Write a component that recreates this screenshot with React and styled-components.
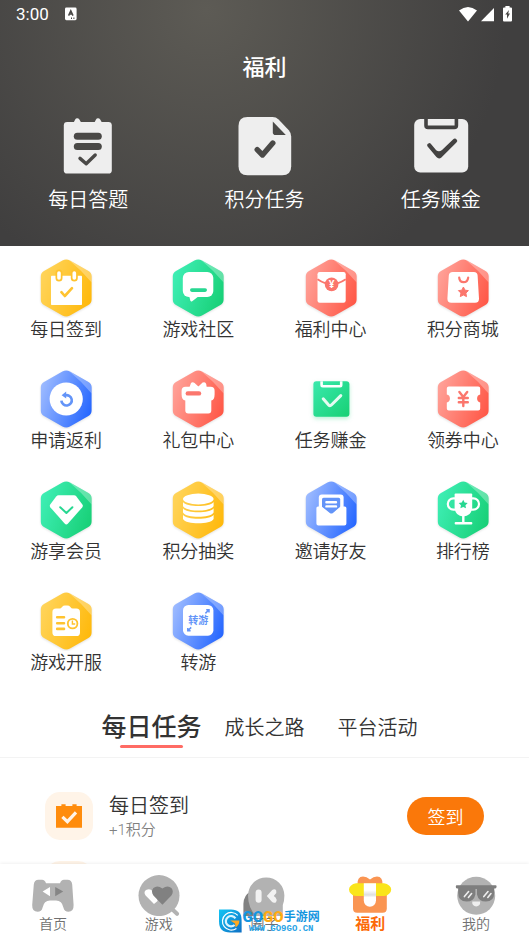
import React, { useId, useState } from "react";
import styled, { createGlobalStyle } from "styled-components";

const GlobalStyle = createGlobalStyle`
  * {
    box-sizing: border-box;
  }

  body {
    margin: 0;
    background-color: #fff;
    color: #333;
    font-family: Roboto, "Noto Sans CJK SC", sans-serif;
    font-weight: 350;
  }

  a {
    color: inherit;
    text-decoration: none;
  }

  button {
    border: none;
    padding: 0;
    background: none;
    color: inherit;
    font-family: inherit;
    font-weight: inherit;
    cursor: pointer;
  }
`;

const Screen = styled.div`
  display: flex;
  flex-direction: column;
  height: 100vh;
`;

const Content = styled.main`
  flex: 1;
  min-height: 0;
  overflow-y: auto;
  scrollbar-width: none;
`;

const Header = styled.header`
  padding-bottom: 32px;
  background: radial-gradient(circle at 39% 10px, #5d5b55, #403f3f 300px);
  color: #fff;
`;

const StatusBar = styled.div`
  display: flex;
  align-items: center;
  gap: 16px;
  height: 28px;
  padding: 0 16px;
  font-size: 17px;
  font-weight: 400;
`;

const StatusIcons = styled.div`
  display: flex;
  margin-left: auto;
`;

const Title = styled.h1`
  margin: 24px 0 32px;
  font-size: 22px;
  line-height: 32px;
  font-weight: 500;
  text-align: center;
`;

const Shortcuts = styled.nav`
  display: grid;
  grid-template-columns: repeat(3, 1fr);
`;

const Shortcut = styled.a`
  display: flex;
  flex-direction: column;
  align-items: center;
  gap: 10px;
  font-size: 20px;
  line-height: 28px;
`;

const Menu = styled.nav`
  display: grid;
  grid-template-columns: repeat(4, 1fr);
  row-gap: 27px;
  padding-top: 12px;
`;

const MenuItem = styled.a`
  display: flex;
  flex-direction: column;
  align-items: center;
  color: #333;
  font-size: 18px;
  line-height: 24px;
`;

const Tabs = styled.div`
  display: flex;
  justify-content: center;
  padding: 36px 0 9px;
  border-bottom: 1px solid #f3f3f3;
`;

const Tab = styled.button`
  display: flex;
  flex-direction: column;
  align-items: center;
  width: 113px;
  font-size: ${(props) => (props.$active ? "25px" : "20px")};
  font-weight: ${(props) => (props.$active ? 500 : 350)};
  line-height: 34px;
  white-space: nowrap;

  &::after {
    content: "";
    width: 63px;
    height: 3px;
    border-radius: 2px;
    background-color: ${(props) => (props.$active ? "#ff6b64" : "transparent")};
  }
`;

const TaskList = styled.ul`
  display: flex;
  flex-direction: column;
  gap: 21px;
  margin: 0;
  padding: 34px 45px;
  list-style: none;
`;

const Task = styled.li`
  display: flex;
  align-items: center;
  gap: 16px;
`;

const TaskIcon = styled.div`
  display: flex;
  align-items: center;
  justify-content: center;
  width: 48px;
  height: 48px;
  border-radius: 15px;
  background-color: #fff4e8;
`;

const TaskText = styled.div`
  flex: 1;
`;

const TaskTitle = styled.h2`
  margin: 0;
  font-size: 20px;
  font-weight: inherit;
  line-height: 28px;
`;

const TaskReward = styled.p`
  margin: 0;
  color: #808080;
  font-size: 15px;
  line-height: 20px;
`;

const TaskButton = styled.button`
  width: 77px;
  height: 38px;
  border-radius: 19px;
  background-color: #fa780a;
  color: #fff;
  font-size: 18px;
`;

const BottomBar = styled.nav`
  position: relative;
  display: grid;
  grid-template-columns: repeat(5, 1fr);
  padding: 10px 0;
  background-color: #fff;
  box-shadow: 0 -1px 3px rgba(0, 0, 0, 0.06);
`;

const BottomLink = styled.a`
  display: flex;
  flex-direction: column;
  align-items: center;
  color: ${(props) => (props.$active ? "#fc6a08" : "#707070")};
  font-size: ${(props) => (props.$active ? "15px" : "14px")};
  font-weight: ${(props) => (props.$active ? 700 : 350)};
  line-height: 16px;
`;

const SiteMark = styled.div`
  position: absolute;
  left: calc(50% - 46px);
  bottom: 9px;
  display: flex;
  align-items: center;
  gap: 1px;
`;

const SiteName = styled.div`
  display: flex;
  align-items: center;
  color: #1596e0;
  font-size: 12px;
  font-weight: 700;
  line-height: 17px;
  white-space: nowrap;
`;

const SiteLetters = styled.span`
  color: ${(props) => props.$color};
  font-size: 15px;
  font-weight: 900;
`;

const SiteAddress = styled.div`
  color: #2aa4e6;
  font-family: "Liberation Mono", monospace;
  font-size: 9px;
  font-weight: 700;
  line-height: 7px;
  text-align: center;
`;

const tones = {
  yellow: ["#ffd45a", "#ffb90c", "#ffc32f"],
  green: ["#3eeeb4", "#18d077", "#27d791"],
  coral: ["#ffa198", "#ff5847", "#fb766d"],
  blue: ["#9cbaff", "#2667ff", "#6394f8"],
};

const HEX =
  "M26.4 2.6Q30.2.4 34 2.6L52.4 13Q55.6 14.9 55.6 18.6V41.4Q55.6 45.1 52.4 47L34 57.4Q30.2 59.6 26.4 57.4L8 47Q4.8 45.1 4.8 41.4V18.6Q4.8 14.9 8 13Z";

const STAR =
  "M0-5 1.6-1.8 5-1.4 2.5 1.1 3.1 4.6 0 3-3.1 4.6-2.5 1.1-5-1.4-1.6-1.8Z";

function Hexagon({ tone, children }) {
  const id = useId();
  const [from, to] = tones[tone];

  return (
    <svg width="60" height="60" viewBox="0 0 60 60" fill="#fff" aria-hidden="true">
      <defs>
        <linearGradient id={id} x1="0" y1="0.3" x2="1" y2="0.7">
          <stop offset="0" stopColor={from} />
          <stop offset="1" stopColor={to} />
        </linearGradient>
      </defs>
      <path
        d={HEX}
        fill={`url(#${id})`}
        style={{ filter: "drop-shadow(0 1px 1px rgba(0, 0, 0, 0.12))" }}
      />
      <path d="M33 2.1L52.4 13Q55.6 14.9 55.6 18.6V24.6Q45 12 33 2.1Z" fillOpacity="0.3" />
      {children}
    </svg>
  );
}

function Line({ d, color = "#fff", width = 2 }) {
  return (
    <path
      d={d}
      fill="none"
      stroke={color}
      strokeWidth={width}
      strokeLinecap="round"
      strokeLinejoin="round"
    />
  );
}

const yellow = tones.yellow[2];
const green = tones.green[2];
const coral = tones.coral[2];
const blue = tones.blue[2];

function CalendarIcon() {
  return (
    <Hexagon tone="yellow">
      <rect x="15" y="17.7" width="31" height="29.3" rx="0.8" />
      {[21.2, 36.5].map((x) => (
        <rect
          key={x}
          x={x}
          y="13.2"
          width="3.6"
          height="8.6"
          rx="1.8"
          stroke={yellow}
          strokeWidth="3.4"
          paintOrder="stroke"
        />
      ))}
      <Line d="M25.4 34.2L28.8 38 36 30.2" color={yellow} width={2.6} />
    </Hexagon>
  );
}

function ChatIcon() {
  return (
    <Hexagon tone="green">
      <rect x="14.8" y="14" width="30.5" height="25" rx="6" />
      <path d="M21 37.5L22.4 42.8Q23 44 24.2 43.2L31 38Z" />
      <rect x="22" y="30.3" width="17" height="3.6" rx="1.8" fill={green} />
    </Hexagon>
  );
}

function RedPacketIcon() {
  return (
    <Hexagon tone="coral">
      <rect x="16.5" y="14" width="28.2" height="30.7" rx="2.2" />
      <path d="M16.5 21.3Q30.6 31 44.7 21.3" fill="none" stroke={coral} strokeWidth="1.8" />
      <circle cx="30.6" cy="26.4" r="6.8" fill={coral} />
      <text
        x="30.6"
        y="30"
        textAnchor="middle"
        fontFamily="Noto Sans, sans-serif"
        fontWeight="700"
        fontSize="10"
      >
        ¥
      </text>
    </Hexagon>
  );
}

function BagIcon() {
  return (
    <Hexagon tone="coral">
      <path d="M19.8 14H40.8Q44.4 14 44.6 17.5L46 40.5Q46.2 44.7 42 44.7H18.4Q14.2 44.7 14.4 40.5L15.8 17.5Q16 14 19.8 14Z" />
      <Line d="M26.2 19.6Q26.6 24.2 30.6 24.2T35.2 19.6" color={coral} width={2.2} />
      <path
        d={STAR}
        transform="translate(30.4 34)"
        fill={coral}
        stroke={coral}
        strokeLinejoin="round"
      />
    </Hexagon>
  );
}

function RefundIcon() {
  return (
    <Hexagon tone="blue">
      <circle cx="30.2" cy="30" r="16.6" />
      <path d="M29 26.4A5.2 5.2 0 1 1 25.4 31.6" fill="none" stroke={blue} strokeWidth="2.6" />
      <path d="M25.6 26.2L30.2 22.6V29.4Z" fill={blue} />
    </Hexagon>
  );
}

function GiftIcon() {
  return (
    <Hexagon tone="coral">
      <path d="M21.2 19L23 14Q24.5 12.4 26.6 14L30.4 17.4 34.6 13.6Q37.4 12.4 38.2 15L38.8 19Z" />
      <path d="M17.6 17.8H42.6Q46.6 17.8 46.6 21.8V25.4Q46.6 30.6 43.3 31.6V41.6Q43.3 44.6 40.3 44.6H20.3Q17.3 44.6 17.3 41.6V31.6Q13.6 30.6 13.6 25.4V21.8Q13.6 17.8 17.6 17.8Z" />
      <rect x="17.6" y="22.2" width="15.6" height="4.4" rx="2.2" fill={coral} />
    </Hexagon>
  );
}

function GreenTaskIcon() {
  const id = useId();

  return (
    <svg width="60" height="60" viewBox="0 0 60 60" aria-hidden="true">
      <defs>
        <linearGradient id={id} x1="0" y1="0" x2="1" y2="1">
          <stop offset="0" stopColor="#3ae9ad" />
          <stop offset="1" stopColor="#17d074" />
        </linearGradient>
      </defs>
      <rect
        x="12.4"
        y="12.3"
        width="36"
        height="35.4"
        rx="3"
        fill={`url(#${id})`}
        style={{ filter: "drop-shadow(0 2px 2px rgba(24, 208, 119, 0.3))" }}
      />
      <path
        d="M20.6 12.3V16Q20.6 17.2 21.8 17.2H39Q40.2 17.2 40.2 16V12.3"
        fill="none"
        stroke="#fff"
        strokeWidth="2.6"
      />
      <Line d="M22.2 29.8L27.2 35.6Q28.8 37.6 30.6 35.8L39.8 26.6" color="#e4fbf1" width={3} />
    </svg>
  );
}

function CouponIcon() {
  return (
    <Hexagon tone="coral">
      <path d="M15.8 17.6H45.2Q47.2 17.6 47.2 19.6V25.6A4 4 0 0 0 47.2 33.4V39.6Q47.2 41.6 45.2 41.6H15.8Q13.8 41.6 13.8 39.6V33.4A4 4 0 0 0 13.8 25.6V19.6Q13.8 17.6 15.8 17.6Z" />
      <Line d="M26.4 23L30.3 28 34.2 23M25.8 29H34.8M25.8 33.2H34.8M30.3 28V37" color={coral} width={2.4} />
    </Hexagon>
  );
}

function DiamondIcon() {
  return (
    <Hexagon tone="green">
      <path d="M22.6 15.2H38Q39.4 15.2 40.4 16.4L46.4 24.4Q47.4 26 46.2 27.4L32 43.6Q30.3 45.4 28.6 43.6L14.4 27.4Q13.2 26 14.2 24.4L20.2 16.4Q21.2 15.2 22.6 15.2Z" />
      <Line d="M24.2 27.2L30.4 33 36.4 27.2" color={green} />
    </Hexagon>
  );
}

function CoinsIcon() {
  return (
    <Hexagon tone="yellow">
      <ellipse cx="30.3" cy="19" rx="15.3" ry="5.4" />
      {[22, 28.2, 34.7].map((y) => (
        <path
          key={y}
          d={`M15 ${y}C18 27.2 42.6 27.2 45.6 ${y}`.replace(/27\.2/g, String(y + 5.4)) +
            `v4.2c-3 5.8-27.6 5.8-30.6 0z`}
        />
      ))}
    </Hexagon>
  );
}

function InviteIcon() {
  return (
    <Hexagon tone="blue">
      <rect x="17.8" y="14.4" width="24.8" height="20" rx="3" />
      <path d="M21 19.4Q21 17.8 22.6 17.8H37.6Q39.2 17.8 39.2 19.4V27.6L30.2 35 21 27.6Z" fill={blue} />
      <Line d="M25.4 22.3H35M25.4 26.4H35" width={2.4} />
      <path d="M17 26.4H20.6L28.8 33Q30.4 34.2 32 33L39.6 26.4H43.8Q45.4 26.4 45.4 28V43.4Q45.4 45.4 43.4 45.4H17.4Q15.4 45.4 15.4 43.4V28Q15.4 26.4 17 26.4Z" />
    </Hexagon>
  );
}

function TrophyIcon() {
  return (
    <Hexagon tone="green">
      <path d="M22.6 13.6H38.2Q39.2 13.6 39.2 14.6V27.4Q38.2 36.4 30.3 36.4T21.6 27.4V14.6Q21.6 13.6 22.6 13.6Z" />
      <path
        d="M23 18.4H20.4A5.4 5.4 0 0 0 20.4 29.6H23M37.8 18.4H40.4A5.4 5.4 0 0 1 40.4 29.6H37.8"
        fill="none"
        stroke="#fff"
        strokeWidth="2.2"
      />
      <Line d="M30.3 35V43.2M22.8 43.2H38.2" width={2.4} />
      <path d={STAR} transform="translate(30.2 24.2) scale(0.9)" fill={green} />
    </Hexagon>
  );
}

function ScheduleIcon() {
  return (
    <Hexagon tone="yellow">
      <path d="M20 17.6H23.6Q25 17.6 26 16Q27.2 14.6 29 14.6H31.4Q33.2 14.6 34.4 16Q35.4 17.6 36.8 17.6H40.4Q44 17.6 44 21.2V41.4Q44 45 40.4 45H20Q16.4 45 16.4 41.4V21.2Q16.4 17.6 20 17.6Z" />
      <Line d="M21.2 26.3H28M21.2 32.2H28M21.2 37.9H28" color={yellow} width={2.6} />
      <circle cx="36.6" cy="32.6" r="4.8" fill="none" stroke={yellow} strokeWidth="1.8" />
      <path d="M36.4 29.6V33H39.2" fill="none" stroke={yellow} strokeWidth="1.4" />
    </Hexagon>
  );
}

function TransferIcon() {
  return (
    <Hexagon tone="blue">
      <rect x="15" y="14" width="30.4" height="30.7" rx="5.4" />
      <text
        x="30.2"
        y="32.8"
        textAnchor="middle"
        fill={blue}
        fontFamily="Noto Sans CJK SC, sans-serif"
        fontWeight="700"
        fontSize="10"
      >
        转游
      </text>
      <path
        d="M37.4 22.4L41 18.8M38.2 18.8H41V21.6M23.2 36.4L19.8 39.8M22.6 39.8H19.8V37"
        fill="none"
        stroke={blue}
        strokeWidth="1.5"
      />
    </Hexagon>
  );
}

const dark = "#4a4947";

function QuizIcon() {
  return (
    <svg width="60" height="60" viewBox="0 0 60 60" fill="#eee" aria-hidden="true">
      <rect x="5.8" y="6" width="48" height="51.6" rx="3.4" />
      <path d="M15.4 7L17.2 3.6Q17.8 2.2 19.2 2.2T21.4 3.6L23.4 7ZM36.2 7L38 3.6Q38.6 2.2 40 2.2T42.2 3.6L44.2 7Z" />
      <rect x="15.8" y="16.7" width="28" height="7" rx="3.5" fill={dark} />
      <rect x="15.8" y="27" width="28" height="7" rx="3.5" fill={dark} />
      <Line d="M22 42.4L28.2 47.8 37.2 39" color={dark} width={3.4} />
    </svg>
  );
}

function PointTaskIcon() {
  return (
    <svg width="60" height="60" viewBox="0 0 60 60" fill="#eee" aria-hidden="true">
      <path d="M13.5 1H38.5Q42 1 44.6 3.4L54.8 14.2Q57.2 17 57.2 20.4V50.2Q57.2 59.2 48.2 59.2H13.5Q4.5 59.2 4.5 50.2V10Q4.5 1 13.5 1Z" />
      <path d="M38.8 5.4L51.8 19H41.6Q38.8 19 38.8 16.2Z" fill={dark} />
      <Line d="M23.2 33.6L28.5 39 38.8 27" color={dark} width={5.4} />
    </svg>
  );
}

function EarnTaskIcon() {
  return (
    <svg width="60" height="60" viewBox="0 0 60 60" fill="#eee" aria-hidden="true">
      <rect x="3.2" y="3" width="54" height="53.6" rx="6" />
      <path
        d="M15 3V9.4Q15 11.4 17 11.4H43.4Q45.4 11.4 45.4 9.4V3"
        fill="none"
        stroke="#434241"
        strokeWidth="3.6"
      />
      <path
        d="M16.6 30.6Q15.4 28.4 17.4 27.4T20.4 28.6L25.2 34.2Q28 36.6 31 34L42 23.4Q44 21.8 45.6 23.4T45.4 26.6L30.4 41.4Q27.8 43.6 25.4 41Z"
        fill="#434241"
      />
    </svg>
  );
}

function HomeIcon() {
  return (
    <svg width="44" height="42" viewBox="0 0 44 42" fill="#b2b2b2" aria-hidden="true">
      <path d="M7.6 5.7H11Q14 5.7 15 9.2H29Q30 5.7 33 5.7H36.4Q40.8 5.7 41.2 10.4L42.6 31Q42.8 37.8 37.4 37.8 33.4 37.8 32.4 33.4 31 26.4 25 26.4H19Q13 26.4 11.6 33.4 10.6 37.8 6.6 37.8 1 37.8 1.2 31L2.8 10.4Q3.2 5.7 7.6 5.7Z" />
      <path d="M11.6 17.6L19 13V22.2Z" fill="#fff" />
      <path d="M32.2 17.6L24.2 13V22.2Z" fill="#858585" />
    </svg>
  );
}

function GamesIcon() {
  return (
    <svg width="44" height="42" viewBox="0 0 44 42" aria-hidden="true">
      <circle cx="22" cy="21.6" r="20.5" fill="#b2b2b2" />
      <Line d="M35.5 35.5L40 39.8" color="#b2b2b2" width={4} />
      <path
        d="M17 30L8.6 21.6Q6 17.6 9.6 15.8T15.8 17.6L20 23 20.6 27Z"
        fill="#fff"
      />
      <path
        d="M25.4 30.8L16.4 21.6Q13.6 17.4 16.4 14 20.4 10.6 25.4 14.6 30.6 10.6 34.4 14 37.2 17.4 34.4 21.6Z"
        fill="#818181"
      />
    </svg>
  );
}

function CircleIcon() {
  return (
    <svg width="44" height="42" viewBox="0 0 44 42" aria-hidden="true">
      <path d="M9 17.4Q1.4 21 1.4 30V42H20Z" fill="#818181" />
      <path d="M24.2 3.4A18.2 18.2 0 0 1 42.4 21.6Q42.4 27 40.8 31V42H14Q6 34 6 21.6A18.2 18.2 0 0 1 24.2 3.4Z" fill="#b2b2b2" />
      <rect x="13.6" y="15.4" width="6" height="13.4" rx="3" fill="#f2f2f2" />
      <path d="M24.8 22L30.2 16Q33 14.4 34.2 16.6 35 18.6 33 20.6L31.8 22 33.6 23.6Q35.6 26 34 28.2 32 29.8 29.6 27.6Z" fill="#f2f2f2" />
    </svg>
  );
}

function WelfareIcon() {
  return (
    <svg width="44" height="42" viewBox="0 0 44 42" aria-hidden="true">
      <defs>
        <linearGradient id="ribbon" x1="0" y1="0" x2="0" y2="1">
          <stop offset="0" stopColor="#fff" />
          <stop offset="0.3" stopColor="#fff" />
          <stop offset="0.5" stopColor="#dedede" />
          <stop offset="0.6" stopColor="#fff" />
        </linearGradient>
      </defs>
      <path d="M9.4 11Q9 2.4 15 2.4 18.6 2.4 22 5.4 25.4 2.4 29 2.4 35 2.4 34.6 11Z" fill="#fa9552" />
      <path d="M5 18H38.8V34.6Q38.8 38.8 34.6 38.8H9.2Q5 38.8 5 34.6Z" fill="#fa9552" />
      <path d="M8 9.2H36Q39 9.2 41.4 11.8 43.2 13.4 43.2 15.6T41.4 19.4Q39 22 36 22H8Q5 22 2.8 19.4 1 17.8 1 15.6T2.8 11.8Q5 9.2 8 9.2Z" fill="#fae51a" />
      <path d="M15.8 9.2H28V26.6A6.1 6.1 0 0 1 15.8 26.6Z" fill="url(#ribbon)" />
    </svg>
  );
}

function ProfileIcon() {
  return (
    <svg width="44" height="42" viewBox="0 0 44 42" aria-hidden="true">
      <circle cx="22.2" cy="21.8" r="19" fill="#b2b2b2" />
      <path d="M2.6 11.2H41.6Q42.6 11.2 42.6 12.6T41.4 14.6H40.2V19Q40.2 27.6 31.8 27.6 24.6 27.6 23 20.4V15H21.4V20.4Q19.8 27.6 12.6 27.6 4.2 27.6 4.2 19V14.6H3Q1.8 14.6 1.8 12.8T2.6 11.2Z" fill="#7e7e7e" />
      <Line d="M10.4 22.6L14.6 17.6M14.4 23.4L17.6 19.6M29.8 22.6L34 17.6M33.8 23.4L37 19.6" color="#eee" width={1.6} />
      <path d="M18.2 27.6H26.2Q26.4 32.4 22.2 32.4T18.2 27.6Z" fill="#eee" />
    </svg>
  );
}

function SiteLogo() {
  return (
    <svg width="23" height="24" viewBox="0 0 23 24" aria-hidden="true">
      <defs>
        <linearGradient id="logo" x1="0" y1="0" x2="1" y2="1">
          <stop offset="0" stopColor="#12c5f5" />
          <stop offset="1" stopColor="#0f6fc4" />
        </linearGradient>
      </defs>
      <path d="M0 .6H12Q22.6 .6 22.6 11V23.6H11Q0 23.6 0 12.6Z" fill="url(#logo)" />
      <path d="M18.8 6.4A8.8 8.8 0 1 0 17.4 19.4" fill="none" stroke="#fff" strokeWidth="1.2" />
      <path d="M16.4 9.4A5.2 5.2 0 1 0 15.6 16" fill="none" stroke="#d9f4ff" strokeWidth="2.2" />
      <path d="M11.2 11.6H20.4Q20.4 16.2 16.6 18.4L16 14.4Z" fill="#ffa91e" />
    </svg>
  );
}

const shortcuts = [
  { label: "每日答题", Icon: QuizIcon },
  { label: "积分任务", Icon: PointTaskIcon },
  { label: "任务赚金", Icon: EarnTaskIcon },
];

const menu = [
  { label: "每日签到", Icon: CalendarIcon },
  { label: "游戏社区", Icon: ChatIcon },
  { label: "福利中心", Icon: RedPacketIcon },
  { label: "积分商城", Icon: BagIcon },
  { label: "申请返利", Icon: RefundIcon },
  { label: "礼包中心", Icon: GiftIcon },
  { label: "任务赚金", Icon: GreenTaskIcon },
  { label: "领券中心", Icon: CouponIcon },
  { label: "游享会员", Icon: DiamondIcon },
  { label: "积分抽奖", Icon: CoinsIcon },
  { label: "邀请好友", Icon: InviteIcon },
  { label: "排行榜", Icon: TrophyIcon },
  { label: "游戏开服", Icon: ScheduleIcon },
  { label: "转游", Icon: TransferIcon },
];

const tabs = ["每日任务", "成长之路", "平台活动"];

const tasks = [
  { title: "每日签到", reward: "+1积分", action: "签到" },
  { title: "积分抽奖", reward: "+1积分", action: "抽奖" },
];

const links = [
  { label: "首页", Icon: HomeIcon },
  { label: "游戏", Icon: GamesIcon },
  { label: "圈子", Icon: CircleIcon },
  { label: "福利", Icon: WelfareIcon, active: true },
  { label: "我的", Icon: ProfileIcon },
];

export default function App() {
  const [activeTab, setActiveTab] = useState(tabs[0]);

  return (
    <Screen>
      <GlobalStyle />
      <Content>
        <Header>
          <StatusBar>
            <span>3:00</span>
            <svg width="12" height="14" viewBox="0 0 12 14" aria-hidden="true">
              <rect y="0.6" width="11.6" height="12.6" rx="1.4" fill="#fff" />
              <path d="M3.6 8.6L5.8 3.8 8 8.6M4.4 7H7.2M6 11.2H7M8.4 11.2H9.4" fill="none" stroke={dark} strokeWidth="1.5" />
            </svg>
            <StatusIcons>
              <svg width="54" height="16" viewBox="0 0 54 16" fill="#fff" aria-hidden="true">
                <path d="M0 4.4Q9-2.6 18 4.4L9 15.4Z" />
                <path d="M22 15.2L35 2V15.2Z" />
                <path d="M46.4 0H50.6V1.6H52Q53 1.6 53 2.6V14.4Q53 15.4 52 15.4H45Q44 15.4 44 14.4V2.6Q44 1.6 45 1.6H46.4Z" />
                <path d="M50 4L46.2 8.6H48V12.8L51 7.6H49.2Z" fill={dark} />
              </svg>
            </StatusIcons>
          </StatusBar>
          <Title>福利</Title>
          <Shortcuts>
            {shortcuts.map(({ label, Icon }) => (
              <Shortcut key={label} href="#">
                <Icon />
                {label}
              </Shortcut>
            ))}
          </Shortcuts>
        </Header>

        <Menu>
          {menu.map(({ label, Icon }) => (
            <MenuItem key={label} href="#">
              <Icon />
              {label}
            </MenuItem>
          ))}
        </Menu>

        <Tabs role="tablist">
          {tabs.map((tab) => (
            <Tab
              key={tab}
              role="tab"
              aria-selected={tab === activeTab}
              $active={tab === activeTab}
              onClick={() => setActiveTab(tab)}
            >
              {tab}
            </Tab>
          ))}
        </Tabs>

        <TaskList>
          {tasks.map(({ title, reward, action }) => (
            <Task key={title}>
              <TaskIcon>
                <svg width="26" height="24" viewBox="0 0 26 24" aria-hidden="true">
                  <path d="M0 2H5.4V.2H9.6V2H16.4V.2H20.6V2H26V23.8H0Z" fill="#ff8c0c" />
                  <path d="M6.4 12.8L11.4 17.6 20 8.4" fill="none" stroke="#fff4e8" strokeWidth="3.2" />
                </svg>
              </TaskIcon>
              <TaskText>
                <TaskTitle>{title}</TaskTitle>
                <TaskReward>{reward}</TaskReward>
              </TaskText>
              <TaskButton>{action}</TaskButton>
            </Task>
          ))}
        </TaskList>
      </Content>

      <BottomBar>
        {links.map(({ label, Icon, active }) => (
          <BottomLink key={label} href="#" $active={active}>
            <Icon />
            {label}
          </BottomLink>
        ))}
        <SiteMark>
          <SiteLogo />
          <div>
            <SiteName>
              <SiteLetters $color="#1596e0">GO</SiteLetters>
              <SiteLetters $color="#ffab12">GO</SiteLetters>
              手游网
            </SiteName>
            <SiteAddress>WWW.GO9GO.CN</SiteAddress>
          </div>
        </SiteMark>
      </BottomBar>
    </Screen>
  );
}
